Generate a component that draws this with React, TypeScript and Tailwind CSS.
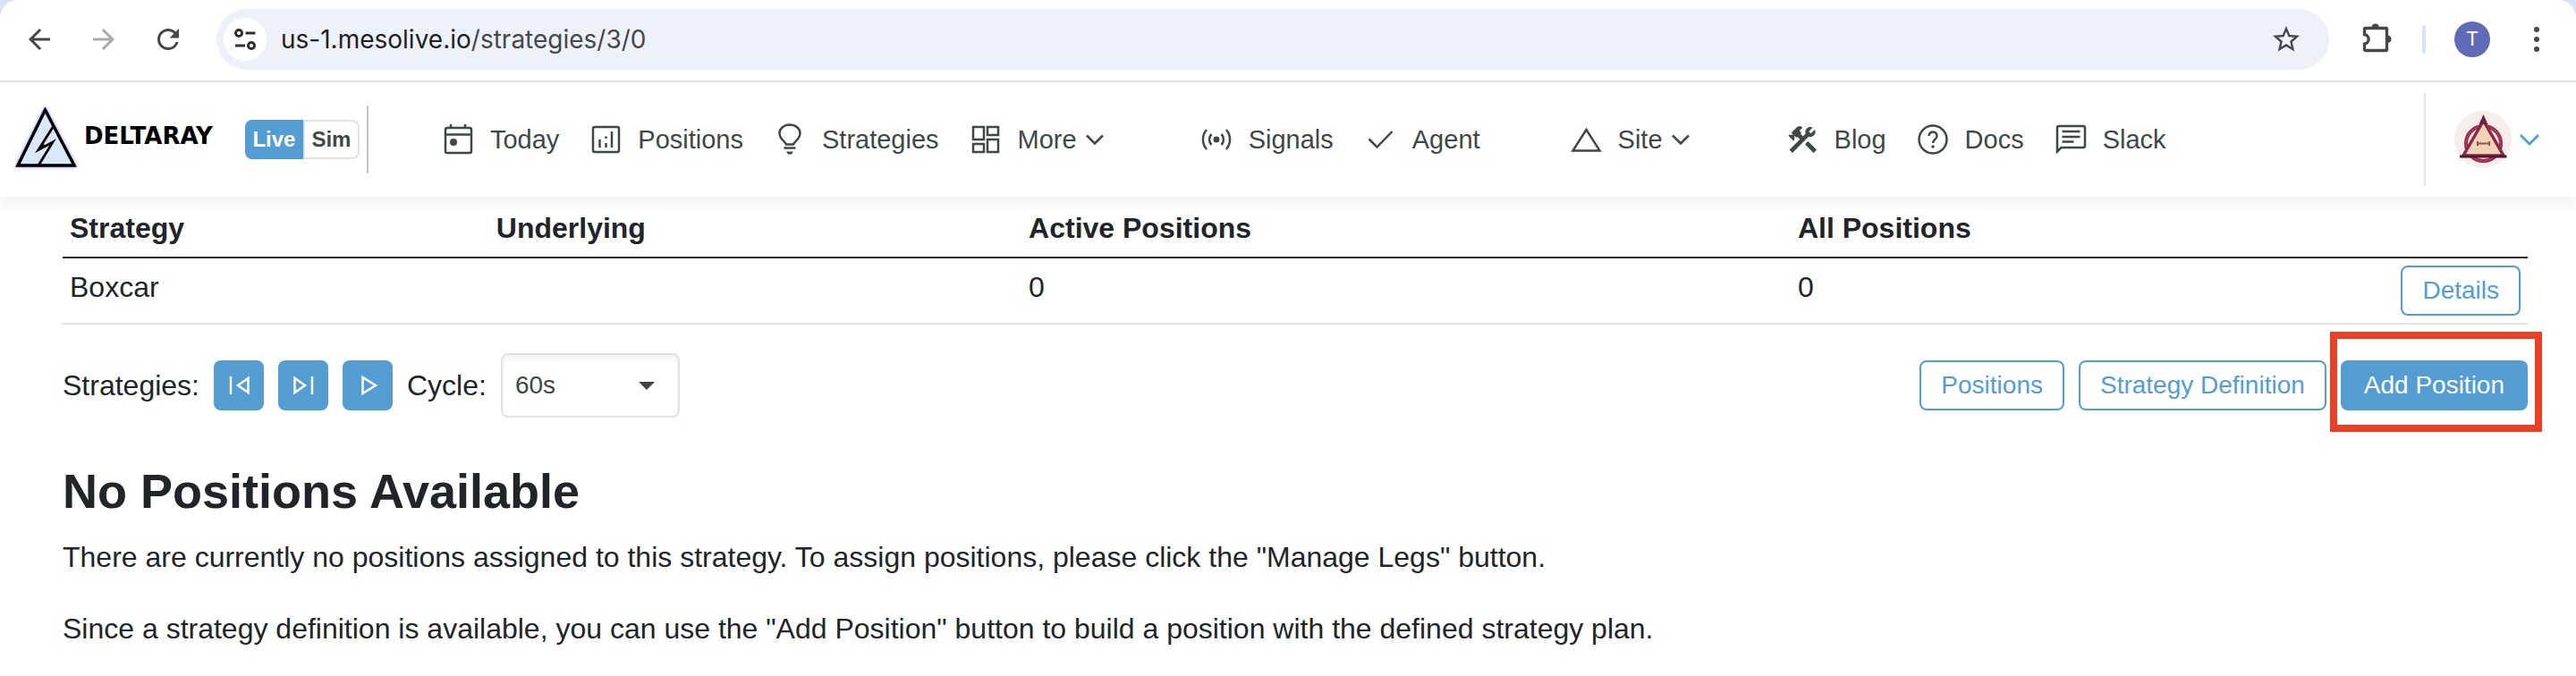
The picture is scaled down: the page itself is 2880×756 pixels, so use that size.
import { useState } from 'react'
import type { ReactNode } from 'react'
import { MdArrowBack, MdArrowForward, MdRefresh, MdStarBorder } from 'react-icons/md'

const icons: Record<string, ReactNode> = {
  today: (
    <>
      <rect x="6" y="7" width="29" height="28" rx="2" />
      <path d="M6 14.5h29M12 3v4M28 3v4" />
      <circle cx="15" cy="23" r="4" fill="currentColor" stroke="none" />
    </>
  ),
  positions: (
    <>
      <rect x="6" y="6" width="29" height="28" rx="2" />
      <path d="M13.5 20v9M20.5 16.5v2.5M20.5 24v5M27 11v18" />
    </>
  ),
  strategies: (
    <>
      <path d="M16 25.5c-.5-3-7.5-5.500-7.500-12.500a11.500 9.500 0 0 1 23 0c0 7-7 9.500-7.500 12.500z" />
      <path d="M13.5 29.5h13" />
      <path d="M16 33.5h8l-2 3h-4z" fill="currentColor" stroke="none" />
    </>
  ),
  more: (
    <>
      <rect x="6" y="6" width="12" height="14" />
      <rect x="22" y="6" width="12" height="9" />
      <rect x="6" y="25" width="12" height="9" />
      <rect x="22" y="20" width="12" height="14" />
    </>
  ),
  signals: (
    <>
      <circle cx="20" cy="20" r="3.5" fill="currentColor" stroke="none" />
      <path d="M14.5 14a8.5 8.5 0 0 0 0 12M25.5 14a8.5 8.5 0 0 1 0 12M9 9a17 17 0 0 0 0 22M31 9a17 17 0 0 1 0 22" />
    </>
  ),
  agent: <path d="M7.5 19.5l9 9L33.5 11" />,
  site: <path d="M20.5 9L5.5 32.5h30z" />,
  blog: (
    <path
      transform="translate(1 1) scale(1.6)"
      fill="currentColor"
      stroke="none"
      d="M13.78 15.3L19.78 21.3L21.89 19.14L15.89 13.14L13.78 15.3M17.5 10.1C17.11 10.1 16.69 10.05 16.36 9.91L4.97 21.25L2.86 19.14L10.27 11.74L8.5 9.96L7.78 10.66L6.33 9.25V12.11L5.63 12.81L2.11 9.25L2.81 8.55H5.62L4.22 7.14L7.78 3.58C8.95 2.41 10.83 2.41 12 3.58L9.89 5.74L11.3 7.14L10.59 7.85L12.38 9.63L14.2 7.75C14.06 7.42 14 7 14 6.63C14 4.66 15.56 3.11 17.5 3.11C18.09 3.11 18.61 3.25 19.08 3.53L16.41 6.2L17.91 7.7L20.58 5.03C20.86 5.5 21 6 21 6.63C21 8.55 19.45 10.1 17.5 10.1Z"
    />
  ),
  docs: (
    <>
      <circle cx="20" cy="20" r="15.5" />
      <path d="M15.5 16a4.5 4.5 0 1 1 7.2 3.6c-1.7 1.3-2.7 2-2.7 4.4" />
      <circle cx="20" cy="28" r="1.8" fill="currentColor" stroke="none" />
    </>
  ),
  slack: (
    <>
      <path d="M5 33.5V7a2 2 0 0 1 2-2h27a2 2 0 0 1 2 2v20a2 2 0 0 1-2 2H9.5z" />
      <path d="M10.5 11h20M10.5 17h20M10.5 22.5h13" />
    </>
  ),
}

const navGroups = [
  [
    { label: 'Today', icon: 'today' },
    { label: 'Positions', icon: 'positions' },
    { label: 'Strategies', icon: 'strategies' },
    { label: 'More', icon: 'more', menu: true },
  ],
  [
    { label: 'Signals', icon: 'signals' },
    { label: 'Agent', icon: 'agent' },
  ],
  [{ label: 'Site', icon: 'site', menu: true }],
  [
    { label: 'Blog', icon: 'blog' },
    { label: 'Docs', icon: 'docs' },
    { label: 'Slack', icon: 'slack' },
  ],
]

function Chevron({ className }: { className?: string }) {
  return (
    <svg className={className} viewBox="0 0 36 36" fill="none" stroke="currentColor" strokeWidth="2.5">
      <path d="M9 13.5l9 9 9-9" />
    </svg>
  )
}

function NavItem({ label, icon, menu }: { label: string; icon: string; menu?: boolean }) {
  const content = (
    <>
      <svg className="size-10 mr-4" viewBox="0 0 40 40" fill="none" stroke="currentColor" strokeWidth="2.5">
        {icons[icon]}
      </svg>
      {label}
      {menu && <Chevron className="size-9 ml-0.5" />}
    </>
  )
  if (menu) {
    return <button className="flex items-center">{content}</button>
  }
  return (
    <a href="#" className="flex items-center">
      {content}
    </a>
  )
}

function BrowserBar() {
  return (
    <div className="bg-[#d3e3fd]">
      <div className="h-[92px] pl-[26px] pr-6 pb-0.5 flex items-center gap-9 bg-white rounded-t-[20px] border-b-2 border-[#e1e1e1] text-[#474747]">
        <button aria-label="Back">
          <MdArrowBack className="size-9" />
        </button>
        <button aria-label="Forward" className="text-[#ababab]">
          <MdArrowForward className="size-9" />
        </button>
        <button aria-label="Reload">
          <MdRefresh className="size-9" />
        </button>

        {/* Address bar */}
        <div className="flex-1 h-[68px] pl-2 pr-[30px] flex items-center gap-4 rounded-full bg-[#edf1fa]">
          <button aria-label="Site information" className="size-12 rounded-full bg-white">
            <svg viewBox="0 0 48 48" fill="none" stroke="#303030" strokeWidth="3">
              <circle cx="17" cy="17" r="3.5" />
              <path d="M24.5 17h11M13 31h11" />
              <circle cx="31" cy="31" r="3.5" />
            </svg>
          </button>
          <div className="flex-1 font-['Inter',sans-serif] text-[28px] leading-10 text-[#474747]">
            <span className="text-[#1f1f1f]">us-1.mesolive.io</span>/strategies/3/0
          </div>
          <button aria-label="Bookmark this tab">
            <MdStarBorder className="size-9" />
          </button>
        </div>

        <div className="flex items-center gap-8">
          <button aria-label="Extensions">
            <svg className="size-9" viewBox="0 0 36 36" fill="none">
              <path
                d="M5 5.5h22.500a1 1 0 0 1 1 1v23a1 1 0 0 1-1 1h-23a1 1 0 0 1-1-1v-6.300a5.400 5.400 0 0 0 0-10.700V6.500a1 1 0 0 1 1-1z"
                stroke="currentColor"
                strokeWidth="3.3"
              />
              <path d="M11.7 4.5a4 4 0 0 1 8 0zM29.5 13.8a4 4 0 0 1 0 8z" fill="currentColor" />
            </svg>
          </button>
          <div className="w-1 h-8 rounded-full bg-[#d3e3fd]" />
          <button className="size-10 rounded-full bg-[#5f6ab9] text-white font-['Roboto',sans-serif] text-[22px] leading-none">
            T
          </button>
          <button aria-label="Browser menu">
            <svg className="size-10" viewBox="0 0 40 40" fill="currentColor">
              <circle cx="20" cy="9" r="3" />
              <circle cx="20" cy="20" r="3" />
              <circle cx="20" cy="31" r="3" />
            </svg>
          </button>
        </div>
      </div>
    </div>
  )
}

function Logo() {
  return (
    <a href="#" className="flex items-center">
      <svg className="size-[72px] drop-shadow-[0_0_2px_#8f94f5]" viewBox="0 0 72 72">
        <path d="M34.5 3L67 65H4z" fill="#dbe8fc" stroke="#000" strokeWidth="3.5" />
        <path d="M43.5 21.5L27 47.5l16-8.500L27 65" fill="none" stroke="#000" strokeWidth="2.8" />
        <path d="M32 41l-6 8 18-10-9 3.500z" fill="#000" />
      </svg>
      <span className="ml-1.5 mb-2 font-['DejaVu_Sans',sans-serif] font-bold text-[26px] leading-8 text-black">
        DELTARAY
      </span>
    </a>
  )
}

function Avatar() {
  return (
    <svg className="size-16" viewBox="0 0 64 64" fill="none">
      <circle cx="32" cy="32" r="32" fill="#f6ece9" />
      <circle cx="32.500" cy="36.500" r="19.500" fill="#f5e3dc" stroke="#8c2a4e" strokeWidth="4" />
      <circle cx="32.500" cy="36.500" r="19.500" stroke="#c0506c" strokeWidth="1" />
      <path d="M32.500 11L10 50h45z" fill="#f3d3b8" stroke="#8a2a4b" strokeWidth="3.5" />
      <path d="M32.500 4l-5 11h10z" fill="#6d2440" />
      <path d="M6 51h52.500" stroke="#4a1b30" strokeWidth="3" />
      <path d="M26 34v5M39 34v5M26 36.500h13" stroke="#8a5a4a" strokeWidth="2" />
    </svg>
  )
}

function AppHeader() {
  return (
    <header className="relative h-32 pl-4 pr-8 flex items-center bg-white shadow-[0_8px_14px_rgba(0,0,0,0.06)] text-[#3f4747]">
      <Logo />
      <div className="ml-9 flex h-11 rounded-lg overflow-hidden text-[24px] leading-none font-bold">
        <button className="w-[65px] bg-[#539dd3] text-white">Live</button>
        <button className="w-[63px] border-2 border-[#dee2e2] rounded-r-lg">Sim</button>
      </div>
      <div className="ml-2 w-0.5 h-[76px] bg-[#c4c4c4]" />

      <nav className="ml-20 flex gap-[98px] text-[29px]">
        {navGroups.map((group) => (
          <div key={group[0].label} className="flex gap-8">
            {group.map((item) => (
              <NavItem key={item.label} {...item} />
            ))}
          </div>
        ))}
      </nav>

      <div className="ml-auto h-[104px] pl-8 flex items-center border-l-2 border-[#e6e6e6]">
        <button aria-label="Account" className="flex items-center">
          <Avatar />
          <Chevron className="size-10 text-[#539dd3]" />
        </button>
      </div>
    </header>
  )
}

const outlineButton =
  'h-14 px-[22px] border-2 border-[#539dd3] rounded-lg text-[28px] leading-none text-[#539dd3]'
const iconButton = 'size-14 rounded-lg bg-[#539dd3] text-white'

export default function App() {
  const [cycle, setCycle] = useState('60s')

  return (
    <div className="min-h-screen bg-white font-['Liberation_Sans',Arial,sans-serif] text-[32px] leading-[48px] text-[#212529]">
      <BrowserBar />
      <AppHeader />

      <main className="pl-[70px] pr-[54px] pt-[3px]">
        <table className="w-full text-left">
          <thead>
            <tr className="border-b-2 border-[#212529]">
              <th className="p-2 w-[17.3%]">Strategy</th>
              <th className="p-2 w-[21.6%]">Underlying</th>
              <th className="p-2 w-[31.2%]">Active Positions</th>
              <th className="p-2">All Positions</th>
              <th className="p-2 w-px" aria-label="Actions" />
            </tr>
          </thead>
          <tbody>
            <tr className="border-b-2 border-[#dee2e2] align-top">
              <td className="p-2">Boxcar</td>
              <td className="p-2" />
              <td className="p-2">0</td>
              <td className="p-2">0</td>
              <td className="p-2">
                <button className={`${outlineButton} block`}>Details</button>
              </td>
            </tr>
          </tbody>
        </table>

        {/* Strategy controls */}
        <div className="mt-8 flex items-center gap-4">
          <span>Strategies:</span>
          <button aria-label="Previous strategy" className={iconButton}>
            <svg viewBox="0 0 56 56" fill="none" stroke="currentColor" strokeWidth="2.5">
              <path d="M19 18v20M38.5 20v16L27 28z" />
            </svg>
          </button>
          <button aria-label="Next strategy" className={iconButton}>
            <svg viewBox="0 0 56 56" fill="none" stroke="currentColor" strokeWidth="2.5">
              <path d="M38 18v20M18.5 20v16L30 28z" />
            </svg>
          </button>
          <button aria-label="Play" className={iconButton}>
            <svg viewBox="0 0 56 56" fill="none" stroke="currentColor" strokeWidth="2.5">
              <path d="M22.5 19v18L37 28z" />
            </svg>
          </button>
          <label htmlFor="cycle">Cycle:</label>
          <div className="relative">
            <select
              id="cycle"
              value={cycle}
              onChange={(e) => setCycle(e.target.value)}
              className="block w-[200px] h-[72px] pl-3.5 appearance-none border-2 border-[#dee2e2] rounded-lg bg-white text-[28px] text-[#3f4747] shadow-[inset_0_4px_6px_rgba(0,0,0,0.05)]"
            >
              <option>30s</option>
              <option>60s</option>
              <option>120s</option>
            </select>
            <svg className="absolute right-7 top-8 w-[18px] h-[9px] pointer-events-none" viewBox="0 0 18 9">
              <path d="M0 0h18L9 9z" fill="#3f4447" />
            </svg>
          </div>

          <div className="ml-auto flex gap-4">
            <button className={outlineButton}>Positions</button>
            <button className={outlineButton}>Strategy Definition</button>
            <div className="relative">
              <button className="h-14 px-[26px] rounded-lg bg-[#539dd3] text-[28px] leading-none text-white">
                Add Position
              </button>
              {/* Highlight frame around the primary action */}
              <div className="absolute -left-3 -right-4 -top-8 -bottom-6 border-8 border-[#ea4025] pointer-events-none" />
            </div>
          </div>
        </div>

        <h2 className="mt-12 mb-4 text-[54px] leading-[68px] font-bold">No Positions Available</h2>
        <p className="mb-8">
          There are currently no positions assigned to this strategy. To assign positions, please click the "Manage
          Legs" button.
        </p>
        <p>
          Since a strategy definition is available, you can use the "Add Position" button to build a position with the
          defined strategy plan.
        </p>
      </main>
    </div>
  )
}
